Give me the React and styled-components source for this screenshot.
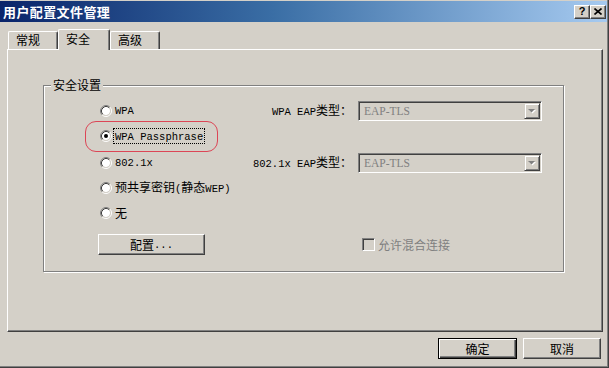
import React from "react";
import styled, { createGlobalStyle } from "styled-components";

const GlobalStyle = createGlobalStyle`
  html, body { margin: 0; padding: 0; background: #d4d0c8; }
  body {
    font-family: "Noto Sans CJK SC", "Liberation Sans", sans-serif;
    font-size: 12px;
    color: #000;
  }
  * { box-sizing: border-box; }
`;

const Window = styled.div`
  width: 609px;
  height: 368px;
  padding: 1px 1px 0 0;
  background: #d4d0c8;
  border-right: 1px solid #404040;
  border-bottom: 1px solid #404040;
  box-shadow: inset -1px -1px #808080;
  display: flex;
  flex-direction: column;
`;

const TitleBar = styled.div`
  height: 21px;
  display: flex;
  align-items: center;
  justify-content: space-between;
  padding: 0 1px 0 3px;
  background: linear-gradient(to right, #0a246a 0%, #3a6ea5 45%, #a6caf0 100%);
`;

const TitleText = styled.div`
  color: #fff;
  font-weight: 700;
  font-size: 13px;
  line-height: 15px;
  letter-spacing: 0.4px;
`;

const CaptionButtons = styled.div`
  display: flex;
  gap: 0;
`;

const CaptionButton = styled.div`
  width: 16px;
  height: 14px;
  background: #d4d0c8;
  border: 1px solid;
  border-color: #fff #404040 #404040 #fff;
  box-shadow: inset -1px -1px #808080;
  display: flex;
  align-items: center;
  justify-content: center;
  font-family: "Liberation Sans", sans-serif;
  font-weight: 700;
  font-size: 11px;
  line-height: 11px;
`;

const Content = styled.div`
  flex: 1;
  display: flex;
  flex-direction: column;
  padding: 7px 6px 0 7px;
`;

const TabStrip = styled.div`
  display: flex;
  align-items: flex-end;
  height: 20px;
  padding-left: 1px;
  position: relative;
  z-index: 1;
`;

const Tab = styled.div`
  width: ${(p) => p.$w}px;
  height: ${(p) => (p.$active ? 21 : 18)}px;
  margin-bottom: ${(p) => (p.$active ? -1 : 0)}px;
  padding: ${(p) => (p.$active ? "2px" : "1px")} 0 0 7px;
  background: #d4d0c8;
  border-left: 1px solid #fff;
  border-top: 1px solid #fff;
  border-right: 1px solid #404040;
  box-shadow: inset -1px 0 #808080;
  border-radius: 2px 2px 0 0;
  line-height: 14px;
`;

const Panel = styled.div`
  width: 596px;
  height: 283px;
  border-left: 1px solid #fff;
  border-top: 1px solid #fff;
  border-right: 1px solid #404040;
  border-bottom: 1px solid #404040;
  box-shadow: inset -1px -1px #808080;
  padding: 35px 0 0 35px;
`;

const GroupBox = styled.div`
  position: relative;
  width: 521px;
  border: 1px solid #808080;
  box-shadow: inset 1px 1px #fff, 1px 1px #fff;
  padding: 13px 0 16px 56px;
  display: flex;
  flex-direction: column;
`;

const GroupLegend = styled.span`
  position: absolute;
  left: 7px;
  top: -8px;
  padding: 0 2px;
  background: #d4d0c8;
  line-height: 14px;
`;

const Row = styled.div`
  display: grid;
  grid-template-columns: 152px 100px 190px;
  align-items: center;
  height: ${(p) => p.$h || 24}px;
  margin-top: ${(p) => p.$mt || 0}px;
`;

const Cell = styled.div`
  position: relative;
  display: flex;
  align-items: center;
  justify-content: ${(p) => (p.$right ? "flex-end" : "flex-start")};
  white-space: nowrap;
`;

const Latin = styled.span`
  font-family: "Liberation Mono", monospace;
  font-size: 10.5px;
`;

const RadioOption = styled.label`
  display: flex;
  align-items: center;
  gap: ${(p) => (p.$focus ? 1 : 3)}px;
  line-height: 14px;
`;

const FocusText = styled.span`
  border: 1px dotted #000;
  padding: 0 1px;
  line-height: 11px;
`;

const Annotation = styled.div`
  position: absolute;
  left: -15px;
  top: -7px;
  width: 133px;
  height: 31px;
  border: 1px solid #dc4656;
  border-radius: 11px;
  pointer-events: none;
`;

const FieldLabel = styled.span`
  line-height: 14px;
`;

const Combo = styled.div`
  width: 184px;
  height: 20px;
  margin-left: 6px;
  display: flex;
  align-items: center;
  background: #d4d0c8;
  border: 1px solid;
  border-color: #808080 #fff #fff #808080;
  box-shadow: inset 1px 1px #404040, inset -1px -1px #d4d0c8;
  padding: 1px;
`;

const ComboText = styled.span`
  flex: 1;
  padding-left: 4px;
  color: #808080;
  font-family: "Liberation Serif", serif;
  font-size: 11.5px;
  line-height: 14px;
`;

const ComboButton = styled.div`
  width: 16px;
  height: 16px;
  background: #d4d0c8;
  border: 1px solid;
  border-color: #d4d0c8 #404040 #404040 #d4d0c8;
  box-shadow: inset 1px 1px #fff, inset -1px -1px #808080;
  display: flex;
  align-items: center;
  justify-content: center;
`;

const PushButton = styled.div`
  width: ${(p) => p.$w}px;
  height: 21px;
  margin-left: ${(p) => p.$ml || 0}px;
  display: flex;
  align-items: center;
  justify-content: center;
  background: #d4d0c8;
  border: 1px solid ${(p) => (p.$default ? "#000" : "#fff")};
  ${(p) =>
    p.$default
      ? `box-shadow: inset 1px 1px #fff, inset -1px -1px #404040, inset -2px -2px #808080;`
      : `border-color: #fff #404040 #404040 #fff; box-shadow: inset -1px -1px #808080;`}
  line-height: 14px;
`;

const CheckOption = styled.label`
  display: flex;
  align-items: center;
  gap: 3px;
  margin-left: 10px;
  color: #808080;
  line-height: 14px;
`;

const CheckBox = styled.span`
  width: 13px;
  height: 13px;
  background: #d4d0c8;
  border: 1px solid;
  border-color: #808080 #fff #fff #808080;
  box-shadow: inset 1px 1px #404040, inset -1px -1px #d4d0c8;
`;

const Footer = styled.div`
  display: flex;
  justify-content: flex-end;
  gap: 6px;
  margin-top: 6px;
`;

function Radio({ checked }) {
  return (
    <svg width="12" height="12" viewBox="0 0 12 12" style={{ flex: "none" }}>
      <circle cx="6" cy="6" r="4" fill="#fff" />
      <path d="M2.11 9.89 A5.5 5.5 0 0 1 9.89 2.11" fill="none" stroke="#808080" />
      <path d="M9.89 2.11 A5.5 5.5 0 0 1 2.11 9.89" fill="none" stroke="#fff" />
      <path d="M2.82 9.18 A4.5 4.5 0 0 1 9.18 2.82" fill="none" stroke="#404040" />
      <path d="M9.18 2.82 A4.5 4.5 0 0 1 2.82 9.18" fill="none" stroke="#d4d0c8" />
      {checked && <circle cx="6" cy="6" r="2" fill="#000" />}
    </svg>
  );
}

function DisabledArrow() {
  return (
    <svg width="8" height="5" viewBox="0 0 8 5">
      <path d="M1 1 H8 L4.5 4.5 Z" fill="#fff" />
      <path d="M0 0 H7 L3.5 3.5 Z" fill="#808080" />
    </svg>
  );
}

function CloseGlyph() {
  return (
    <svg width="8" height="7" viewBox="0 0 8 7">
      <path d="M0.5 0.5 L7.5 6.5 M7.5 0.5 L0.5 6.5" stroke="#000" strokeWidth="1.6" />
    </svg>
  );
}

function ComboBox() {
  return (
    <Combo>
      <ComboText>EAP-TLS</ComboText>
      <ComboButton>
        <DisabledArrow />
      </ComboButton>
    </Combo>
  );
}

export default function App() {
  return (
    <>
      <GlobalStyle />
      <Window>
        <TitleBar>
          <TitleText>用户配置文件管理</TitleText>
          <CaptionButtons>
            <CaptionButton>?</CaptionButton>
            <CaptionButton>
              <CloseGlyph />
            </CaptionButton>
          </CaptionButtons>
        </TitleBar>
        <Content>
          <TabStrip>
            <Tab $w={50}>常规</Tab>
            <Tab $w={52} $active>
              安全
            </Tab>
            <Tab $w={50}>高级</Tab>
          </TabStrip>
          <Panel>
            <GroupBox>
              <GroupLegend>安全设置</GroupLegend>
              <Row>
                <Cell>
                  <RadioOption>
                    <Radio />
                    <Latin>WPA</Latin>
                  </RadioOption>
                </Cell>
                <Cell $right>
                  <FieldLabel>
                    <Latin>WPA EAP</Latin>类型：
                  </FieldLabel>
                </Cell>
                <Cell>
                  <ComboBox />
                </Cell>
              </Row>
              <Row $mt={1}>
                <Cell>
                  <Annotation />
                  <RadioOption $focus>
                    <Radio checked />
                    <FocusText>
                      <Latin>WPA Passphrase</Latin>
                    </FocusText>
                  </RadioOption>
                </Cell>
              </Row>
              <Row $mt={3}>
                <Cell>
                  <RadioOption>
                    <Radio />
                    <Latin>802.1x</Latin>
                  </RadioOption>
                </Cell>
                <Cell $right>
                  <FieldLabel>
                    <Latin>802.1x EAP</Latin>类型：
                  </FieldLabel>
                </Cell>
                <Cell>
                  <ComboBox />
                </Cell>
              </Row>
              <Row $mt={1}>
                <Cell>
                  <RadioOption>
                    <Radio />
                    <span>
                      预共享密钥<Latin>(</Latin>静态<Latin>WEP)</Latin>
                    </span>
                  </RadioOption>
                </Cell>
              </Row>
              <Row $mt={1}>
                <Cell>
                  <RadioOption>
                    <Radio />
                    <span>无</span>
                  </RadioOption>
                </Cell>
              </Row>
              <Row $mt={9} $h={21}>
                <Cell>
                  <PushButton $w={107} $ml={-2}>
                    配置<Latin>...</Latin>
                  </PushButton>
                </Cell>
                <Cell />
                <Cell>
                  <CheckOption>
                    <CheckBox />
                    <span>允许混合连接</span>
                  </CheckOption>
                </Cell>
              </Row>
            </GroupBox>
          </Panel>
          <Footer>
            <PushButton $w={79} $default>
              确定
            </PushButton>
            <PushButton $w={78}>取消</PushButton>
          </Footer>
        </Content>
      </Window>
    </>
  );
}
